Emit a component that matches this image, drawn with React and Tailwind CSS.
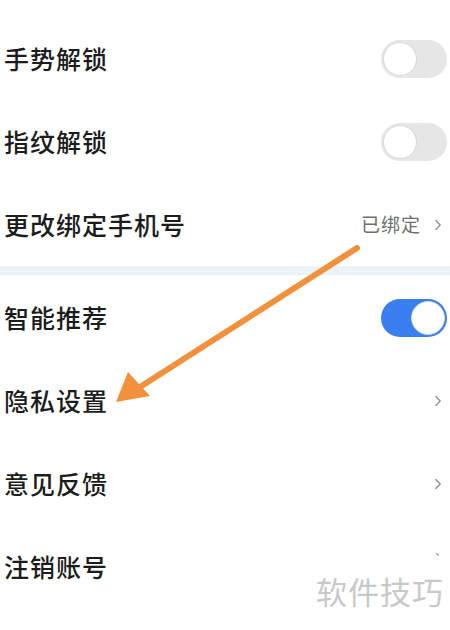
import React from 'react';
import { ChevronRight } from 'lucide-react';

const Toggle = ({ on }) => (
  <div
    className={`w-[66px] h-[38px] rounded-full flex items-center p-[2px] ${
      on ? 'bg-[#3a7ff0] justify-end' : 'bg-[#e6e6e6] justify-start'
    }`}
  >
    <span className="h-[34px] w-[34px] rounded-full bg-white border border-[#d8d8d8]" />
  </div>
);

const Row = ({ label, children }) => (
  <div className="h-[83px] flex items-center justify-between pl-[4px] pr-[3px]">
    <span className="text-[25px] font-medium text-[#1c1c1c] tracking-[1px]">{label}</span>
    {children}
  </div>
);

const Arrow = () => <ChevronRight className="w-[18px] h-[18px] text-[#8a8a8a]" strokeWidth={1.6} />;

const App = () => {
  return (
    <div
      className="relative w-[450px] h-[630px] overflow-hidden bg-white"
      style={{ fontFamily: '"Noto Sans CJK SC", "Noto Sans", sans-serif' }}
    >
      <div className="pt-[17px]">
        <Row label="手势解锁"><Toggle /></Row>
        <Row label="指纹解锁"><Toggle /></Row>
        <Row label="更改绑定手机号">
          <div className="flex items-center gap-[8px] text-[#6f6f6f]">
            <span className="text-[19px] tracking-[1px]">已绑定</span>
            <Arrow />
          </div>
        </Row>
        <div className="h-[9px] bg-[#edf2f8] mb-[1px]" />
        <Row label="智能推荐"><Toggle on /></Row>
        <Row label="隐私设置"><Arrow /></Row>
        <Row label="意见反馈"><Arrow /></Row>
        <Row label="注销账号">
          <span className="w-[18px] h-[18px] flex items-start justify-center text-[#8a8a8a] text-[14px] leading-none -mt-[12px]">`</span>
        </Row>
      </div>

      {/* annotation arrow */}
      <svg className="absolute inset-0 pointer-events-none" width="450" height="630" viewBox="0 0 450 630">
        <line x1="357" y1="248" x2="140" y2="387" stroke="#f2913d" strokeWidth="6" strokeLinecap="round" />
        <polygon points="116,402 128,372 150,396" fill="#f2913d" />
      </svg>

      <div className="absolute right-[6px] bottom-[16px] text-[31px] text-[#c9c9c9] tracking-[1px]">软件技巧</div>
    </div>
  );
};

export default App;
